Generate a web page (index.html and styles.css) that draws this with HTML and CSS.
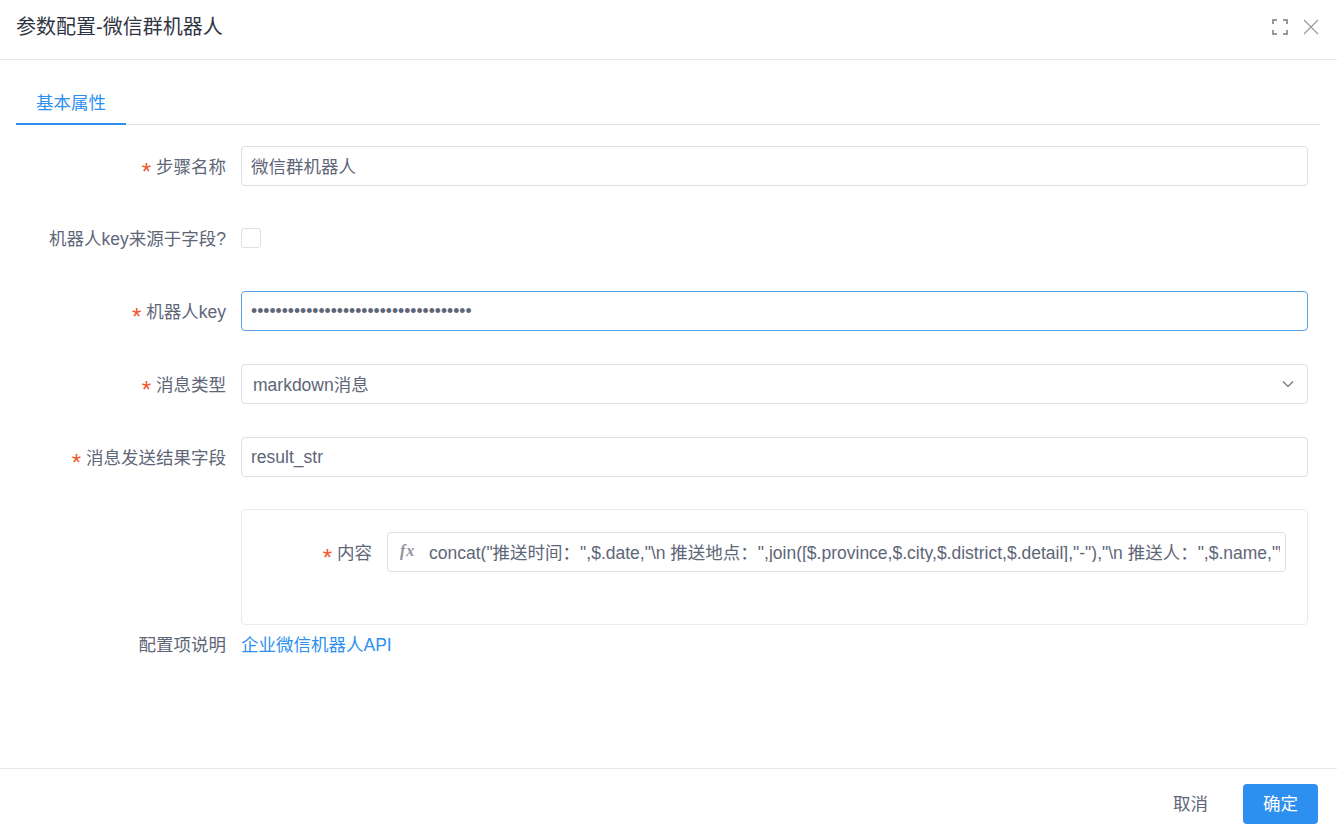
FILE: index.html
```html
<!DOCTYPE html>
<html lang="zh-CN">
<head>
    <meta charset="UTF-8">
    <title>参数配置-微信群机器人</title>
    <link rel="stylesheet" href="styles.css">
</head>
<body>
    <div class="dialog">
        <div class="dialogHeader">
            <span class="dialogTitle">参数配置-微信群机器人</span>
            <div class="headerIcons">
                <svg class="iconBtn" width="16" height="16" viewBox="0 0 16 16" fill="none" stroke="#999" stroke-width="2">
                    <path d="M1 5V1H5M11 1H15V5M15 11V15H11M5 15H1V11"/>
                </svg>
                <svg class="iconBtn" width="16" height="16" viewBox="0 0 16 16" fill="none" stroke="#999" stroke-width="1.2">
                    <path d="M1 1L15 15M15 1L1 15"/>
                </svg>
            </div>
        </div>

        <div class="dialogBody">
            <div class="tabs">
                <div class="tab">基本属性</div>
            </div>

            <form class="form">
                <div class="row">
                    <label class="label"><i class="star">*</i>步骤名称</label>
                    <input class="input" type="text" value="微信群机器人">
                </div>
                <div class="row rowCheck">
                    <label class="label">机器人key来源于字段?</label>
                    <span class="checkbox"></span>
                </div>
                <div class="row">
                    <label class="label"><i class="star">*</i>机器人key</label>
                    <input class="input latinInput focused" type="password" value="123456789012345678901234567890123456">
                </div>
                <div class="row">
                    <label class="label"><i class="star">*</i>消息类型</label>
                    <div class="input select">
                        <span class="selectText">markdown消息</span>
                        <svg width="12" height="8" viewBox="0 0 12 8" fill="none" stroke="#7b8190" stroke-width="1.5">
                            <path d="M1 1.5L6 6.5L11 1.5"/>
                        </svg>
                    </div>
                </div>
                <div class="row">
                    <label class="label"><i class="star">*</i>消息发送结果字段</label>
                    <input class="input latinInput" type="text" value="result_str">
                </div>

                <div class="row rowPanel">
                    <div class="label"></div>
                    <div class="panel">
                        <label class="panelLabel"><i class="star">*</i>内容</label>
                        <div class="fxInput">
                            <span class="fx">fx</span>
                            <input class="fxValue" type="text" value='concat("推送时间：",$.date,"\n 推送地点：",join([$.province,$.city,$.district,$.detail],"-"),"\n 推送人：",$.name,"\n 推送内容：",$.content)'>
                        </div>
                    </div>
                </div>

                <div class="row rowLink">
                    <label class="label">配置项说明</label>
                    <a class="link" href="#">企业微信机器人API</a>
                </div>
            </form>
        </div>

        <div class="dialogFooter">
            <button type="button" class="btn">取消</button>
            <button type="button" class="btn btnPrimary">确定</button>
        </div>
    </div>
</body>
</html>
```

FILE: styles.css
```css
* {
  box-sizing: border-box;
}

body {
  margin: 0;
  height: 836px;
  overflow: hidden;
  background-color: #ffffff;
  font-family: "Liberation Sans", "Noto Sans CJK SC", sans-serif;
  font-size: 17.5px;
  color: #5e6678;
}

.dialog {
  display: flex;
  flex-direction: column;
  height: 836px;
}

.dialogHeader {
  display: flex;
  align-items: center;
  justify-content: space-between;
  height: 60px;
  padding: 0 18px 6px 16px;
  border-bottom: 1px solid #e8e8e8;
}

.dialogTitle {
  margin-bottom: 2px;
  font-size: 20px;
  color: #2f3542;
}

.headerIcons {
  display: flex;
  gap: 15px;
}

.iconBtn {
  display: block;
}

.dialogBody {
  flex: 1;
  padding: 0 29px 0 16px;
}

.tabs {
  height: 65px;
  margin-right: -12px;
  padding-top: 20px;
  border-bottom: 1px solid #dcdfe6;
}

.tab {
  width: 110px;
  height: 45px;
  line-height: 46px;
  text-align: center;
  color: #2d8ff0;
  border-bottom: 2px solid #2d8ff0;
}

.form {
  padding-top: 21px;
}

.row {
  display: flex;
  align-items: center;
  margin-bottom: 33px;
}

.rowCheck {
  height: 38px;
  margin-bottom: 34px;
}

.rowPanel {
  align-items: flex-start;
  margin-top: -1px;
  margin-bottom: 8px;
}

.rowLink {
  height: 22px;
}

.label {
  flex: none;
  width: 225px;
  padding: 0 15px 2px 0;
  text-align: right;
}

.star {
  margin-right: 5px;
  font-style: normal;
  font-size: 24px;
  line-height: 0;
  vertical-align: -7px;
  color: #f2552c;
}

.input {
  flex: 1;
  height: 40px;
  padding: 0 9px 2px;
  border: 1px solid #dcdfe6;
  border-radius: 4px;
  outline: none;
  background-color: #fff;
  font-family: inherit;
  font-size: 17.5px;
  color: #5e6678;
}

.latinInput {
  padding-bottom: 0;
}

.focused {
  border-color: #5aa2ea;
}

.select {
  display: flex;
  align-items: center;
  justify-content: space-between;
  padding: 0 13px 0 11px;
}

.selectText {
  margin-bottom: 2px;
}

.checkbox {
  width: 20px;
  height: 20px;
  border: 1px solid #dcdfe6;
  border-radius: 3px;
}

.panel {
  flex: 1;
  display: flex;
  align-items: center;
  height: 116px;
  padding: 22px 21px 52px 0;
  border: 1px solid #e8eaee;
  border-radius: 4px;
}

.panelLabel {
  flex: none;
  width: 145px;
  padding: 0 15px 2px 0;
  text-align: right;
}

.fxInput {
  flex: 1;
  display: flex;
  align-items: center;
  min-width: 0;
  height: 40px;
  padding: 0 5px 2px 12px;
  border: 1px solid #dcdfe6;
  border-radius: 4px;
}

.fx {
  flex: none;
  width: 29px;
  font-family: "Liberation Serif", serif;
  font-style: italic;
  font-weight: 700;
  font-size: 16px;
  letter-spacing: 1px;
  color: #8f939e;
}

.fxValue {
  flex: 1;
  min-width: 0;
  padding: 0;
  border: none;
  outline: none;
  font-family: inherit;
  font-size: 17.5px;
  color: #5e6678;
}

.link {
  margin-bottom: 2px;
  color: #2d8ff0;
  text-decoration: none;
}

.dialogFooter {
  display: flex;
  align-items: center;
  justify-content: flex-end;
  height: 68px;
  padding: 3px 19px 0 0;
  border-top: 1px solid #e8e8e8;
}

.btn {
  width: 75px;
  height: 40px;
  padding: 0 0 3px;
  border: none;
  border-radius: 4px;
  background: none;
  font-family: inherit;
  font-size: 17.5px;
  color: #5e6678;
}

.btnPrimary {
  margin-left: 15px;
  background-color: #2d8ff0;
  color: #fff;
}
```
